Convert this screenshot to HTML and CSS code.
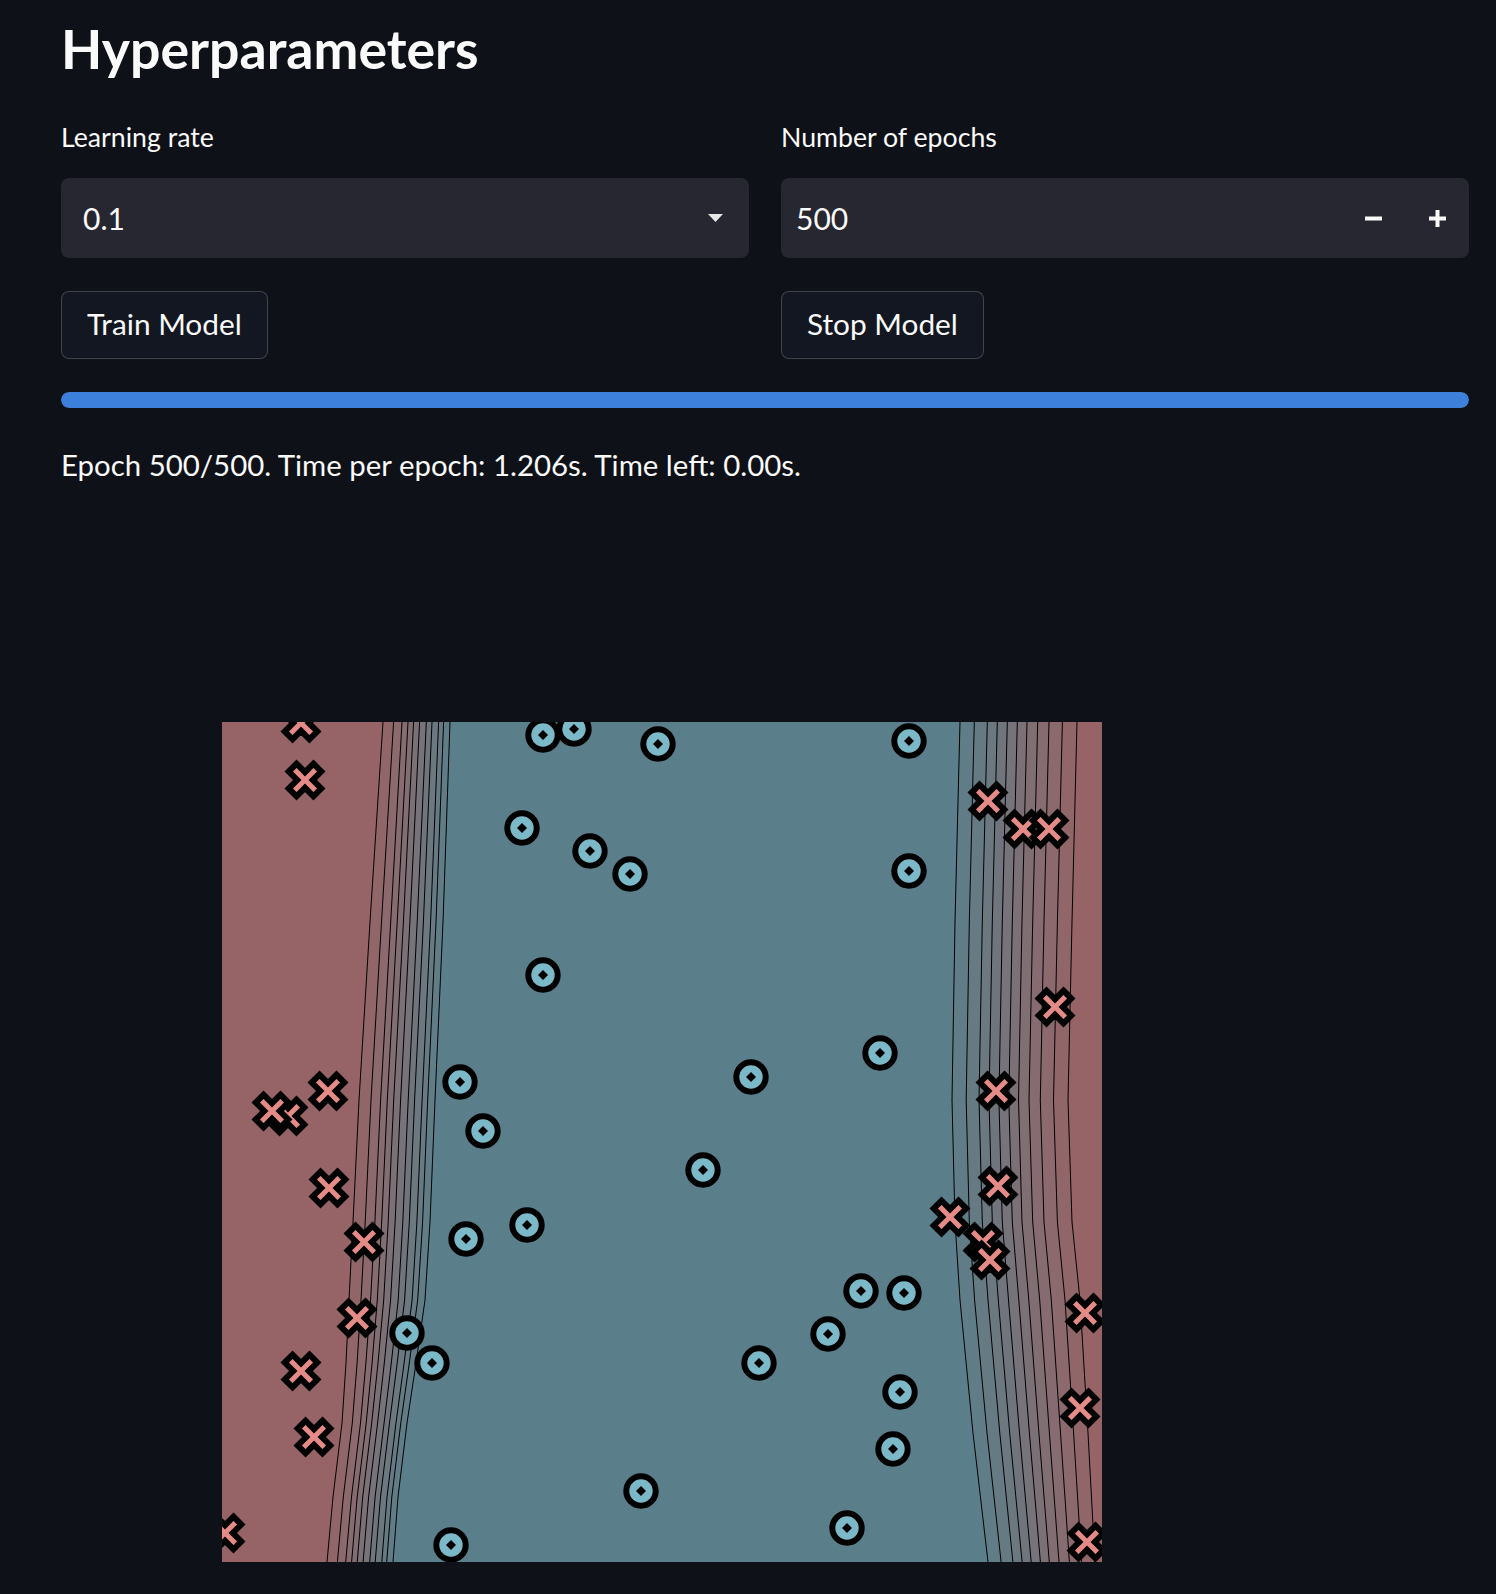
FILE: index.html
```html
<!DOCTYPE html>
<html lang="en">
<head>
<meta charset="utf-8">
<title>Hyperparameters</title>
<link rel="stylesheet" href="styles.css">
</head>
<body>
<main class="page">
  <h3 class="title">Hyperparameters</h3>
  <div class="cols fields">
    <div class="col">
      <div class="label">Learning rate</div>
      <div class="select">
        <span class="val">0.1</span>
        <svg class="caret" width="15" height="8" viewBox="0 0 15 8"><polygon points="0,0 15,0 7.5,8"/></svg>
      </div>
    </div>
    <div class="col">
      <div class="label">Number of epochs</div>
      <div class="number">
        <span class="val">500</span>
        <div class="steps">
          <button class="step" type="button"><svg width="17" height="17" viewBox="0 0 17 17"><rect class="glyph" x="0" y="6.5" width="17" height="4"/></svg></button>
          <button class="step" type="button"><svg width="17" height="17" viewBox="0 0 17 17"><rect class="glyph" x="0" y="6.5" width="17" height="4"/><rect class="glyph" x="6.5" y="0" width="4" height="17"/></svg></button>
        </div>
      </div>
    </div>
  </div>
  <div class="cols btnrow">
    <div class="col"><button class="btn" type="button">Train Model</button></div>
    <div class="col"><button class="btn" type="button">Stop Model</button></div>
  </div>
  <div class="progress"><div class="bar" style="width:100%"></div></div>
  <p class="status">Epoch 500/500. Time per epoch: 1.206s. Time left: 0.00s.</p>
  <div class="figure">
    <svg class="plot" width="880" height="840" viewBox="0 0 880 840">
      <defs>
        <clipPath id="plotclip"><rect width="880" height="840"/></clipPath>
        <g id="xm"><polygon class="xmark" transform="rotate(45)" points="-5.5,-17.5 5.5,-17.5 5.5,-5.5 17.5,-5.5 17.5,5.5 5.5,5.5 5.5,17.5 -5.5,17.5 -5.5,5.5 -17.5,5.5 -17.5,-5.5 -5.5,-5.5"/></g>
        <g id="om"><circle class="omark" r="14.7"/><polygon class="odot" points="0,-5 5,0 0,5 -5,0"/></g>
      </defs>
      <g clip-path="url(#plotclip)">
        <rect width="880" height="840" fill="#966466"/>
        <g class="ct">
          <path fill="#916669" d="M161,-20 L161,0 148,200 137,378 131,500 127,578 124,641 120,701 111,775 105,840 105,860 2000,860 2000,-20Z"/>
          <path fill="#8b696d" d="M171.6,-20 L171.6,0 159.5,200 149,378 143.2,500 139,578 135.1,641 130.3,701 121.3,775 115.4,840 115.4,860 2000,860 2000,-20Z"/>
          <path fill="#866b70" d="M180,-20 L180,0 168.7,200 158.6,378 152.9,500 148.6,578 143.9,641 138.5,701 129.5,775 123.7,840 123.7,860 2000,860 2000,-20Z"/>
          <path fill="#816e73" d="M186,-20 L186,0 175.2,200 165.3,378 159.7,500 155.3,578 150.1,641 144.2,701 135.2,775 129.6,840 129.6,860 2000,860 2000,-20Z"/>
          <path fill="#7b7076" d="M191.6,-20 L191.6,0 181.4,200 171.7,378 166.2,500 161.7,578 156,641 149.7,701 140.7,775 135.2,840 135.2,860 2000,860 2000,-20Z"/>
          <path fill="#76737a" d="M197.6,-20 L197.6,0 187.9,200 178.6,378 173.1,500 168.6,578 162.3,641 155.6,701 146.6,775 141.1,840 141.1,860 2000,860 2000,-20Z"/>
          <path fill="#70757d" d="M204.3,-20 L204.3,0 195.2,200 186.2,378 180.8,500 176.2,578 169.3,641 162.1,701 153.1,775 147.7,840 147.7,860 2000,860 2000,-20Z"/>
          <path fill="#6b7880" d="M210,-20 L210,0 201.4,200 192.6,378 187.3,500 182.6,578 175.2,641 167.5,701 158.5,775 153.2,840 153.2,860 2000,860 2000,-20Z"/>
          <path fill="#667a83" d="M216.6,-20 L216.6,0 208.6,200 200.1,378 194.9,500 190.1,578 182.1,641 174,701 165,775 159.8,840 159.8,860 2000,860 2000,-20Z"/>
          <path fill="#607d87" d="M221.6,-20 L221.6,0 214,200 205.7,378 200.6,500 195.7,578 187.3,641 178.8,701 169.8,775 164.7,840 164.7,860 2000,860 2000,-20Z"/>
          <path fill="#5b7f8a" d="M228,-20 L228,0 221,200 213,378 208,500 203,578 194,641 185,701 176,775 171,840 171,860 2000,860 2000,-20Z"/>

          <path fill="#607d87" d="M738,-20 L738,0 733,200 730,378 733,500 738,578 751,711 766,840 766,860 2000,860 2000,-20Z"/>
          <path fill="#667a83" d="M752.3,-20 L752.3,0 747.3,200 744.2,378 747.3,500 752.6,578 765,711 779.1,840 779.1,860 2000,860 2000,-20Z"/>
          <path fill="#6b7880" d="M765.3,-20 L765.3,0 760.3,200 757,378 760.3,500 766,578 777.8,711 790.9,840 790.9,860 2000,860 2000,-20Z"/>
          <path fill="#70757d" d="M775.3,-20 L775.3,0 770.3,200 767,378 770.3,500 776.3,578 787.7,711 800.1,840 800.1,860 2000,860 2000,-20Z"/>
          <path fill="#76737a" d="M785.3,-20 L785.3,0 780.3,200 776.9,378 780.3,500 786.5,578 797.5,711 809.2,840 809.2,860 2000,860 2000,-20Z"/>
          <path fill="#7b7076" d="M795.3,-20 L795.3,0 790.3,200 786.8,378 790.3,500 796.8,578 807.4,711 818.4,840 818.4,860 2000,860 2000,-20Z"/>
          <path fill="#816e73" d="M805,-20 L805,0 800,200 796.5,378 800,500 806.8,578 816.9,711 827.3,840 827.3,860 2000,860 2000,-20Z"/>
          <path fill="#866b70" d="M815.7,-20 L815.7,0 810.7,200 807,378 810.7,500 817.7,578 827.4,711 837,840 837,860 2000,860 2000,-20Z"/>
          <path fill="#8b696d" d="M827,-20 L827,0 822,200 818.3,378 822,500 829.3,578 838.5,711 847.4,840 847.4,860 2000,860 2000,-20Z"/>
          <path fill="#916669" d="M840.4,-20 L840.4,0 835.4,200 831.5,378 835.4,500 843,578 851.6,711 859.6,840 859.6,860 2000,860 2000,-20Z"/>
          <path fill="#966466" d="M855,-20 L855,0 850,200 846,378 850,500 858,578 866,711 873,840 873,860 2000,860 2000,-20Z"/>
        </g>

        <use href="#xm" x="79" y="1"/>
        <use href="#xm" x="83" y="58"/>
        <use href="#xm" x="766" y="79"/>
        <use href="#xm" x="801" y="107"/>
        <use href="#xm" x="827" y="107"/>
        <use href="#xm" x="833" y="285"/>
        <use href="#xm" x="106" y="369"/>
        <use href="#xm" x="66" y="394"/>
        <use href="#xm" x="50" y="389"/>
        <use href="#xm" x="774" y="369"/>
        <use href="#xm" x="107" y="466"/>
        <use href="#xm" x="776" y="464"/>
        <use href="#xm" x="728" y="495"/>
        <use href="#xm" x="142" y="520"/>
        <use href="#xm" x="761" y="520"/>
        <use href="#xm" x="768" y="538"/>
        <use href="#xm" x="135" y="596"/>
        <use href="#xm" x="863" y="591"/>
        <use href="#xm" x="79" y="649"/>
        <use href="#xm" x="858" y="686"/>
        <use href="#xm" x="92" y="715"/>
        <use href="#xm" x="3" y="811"/>
        <use href="#xm" x="865" y="820"/>

        <use href="#om" x="352" y="7"/>
        <use href="#om" x="321" y="13"/>
        <use href="#om" x="436" y="22"/>
        <use href="#om" x="687" y="19"/>
        <use href="#om" x="300" y="106"/>
        <use href="#om" x="368" y="129"/>
        <use href="#om" x="408" y="152"/>
        <use href="#om" x="687" y="149"/>
        <use href="#om" x="321" y="253"/>
        <use href="#om" x="238" y="360"/>
        <use href="#om" x="529" y="355"/>
        <use href="#om" x="658" y="331"/>
        <use href="#om" x="261" y="409"/>
        <use href="#om" x="481" y="448"/>
        <use href="#om" x="244" y="517"/>
        <use href="#om" x="305" y="503"/>
        <use href="#om" x="639" y="569"/>
        <use href="#om" x="682" y="571"/>
        <use href="#om" x="185" y="611"/>
        <use href="#om" x="210" y="641"/>
        <use href="#om" x="606" y="612"/>
        <use href="#om" x="537" y="641"/>
        <use href="#om" x="678" y="670"/>
        <use href="#om" x="671" y="727"/>
        <use href="#om" x="419" y="769"/>
        <use href="#om" x="625" y="806"/>
        <use href="#om" x="229" y="823"/>
      </g>
    </svg>
  </div>
</main>
</body>
</html>
```

FILE: styles.css
```css
* {
  box-sizing: border-box;
}

html,
body {
  margin: 0;
  background: #0e1117;
}

body {
  color: #fafafa;
  font-family: Lato, "Source Sans Pro", sans-serif;
}

.page {
  width: 1408px;
  margin-left: 61px;
  padding-top: 17px;
}

.title {
  margin: 0;
  font-size: 53.6px;
  font-weight: 700;
  line-height: 62.4px;
}

.cols {
  display: grid;
  grid-template-columns: 1fr 1fr;
  column-gap: 32px;
}

.fields {
  margin-top: 40px;
}

.label {
  font-size: 26.7px;
  line-height: 36px;
  margin-bottom: 23px;
}

.select,
.number {
  height: 80px;
  background: #262730;
  border-radius: 8px;
  display: flex;
  align-items: center;
}

.select {
  padding: 0 26px 0 22px;
}

.number {
  padding-left: 15px;
}

.val {
  flex: 1;
  font-size: 30px;
}

.caret polygon {
  fill: #e6e6e6;
}

.steps {
  display: flex;
  height: 100%;
}

.step {
  width: 64px;
  height: 100%;
  padding: 0;
  border: 0;
  background: none;
  display: flex;
  align-items: center;
  justify-content: center;
}

.glyph {
  fill: #fafafa;
}

.btnrow {
  margin-top: 33px;
}

.btn {
  height: 68px;
  padding: 0 25px 3px;
  display: inline-flex;
  align-items: center;
  background: #131721;
  border: 1px solid rgba(250, 250, 250, 0.2);
  border-radius: 8px;
  color: #fafafa;
  font-family: Lato, "Source Sans Pro", sans-serif;
  font-size: 29.8px;
}

.progress {
  margin-top: 33px;
  height: 16px;
  border-radius: 8px;
  background: #262730;
  overflow: hidden;
}

.bar {
  height: 100%;
  background: #3d80db;
  border-radius: 8px;
}

.status {
  margin: 33px 0 0;
  font-size: 29.4px;
  line-height: 48px;
}

.figure {
  margin-top: 233px;
  padding-left: 161px;
}

.plot {
  display: block;
}

.ct path {
  stroke: #000;
  stroke-width: 1;
}

.xmark {
  fill: #e48b87;
  stroke: #000;
  stroke-width: 6;
  stroke-linejoin: miter;
}

.omark {
  fill: #7bb9c9;
  stroke: #000;
  stroke-width: 6;
}

.odot {
  fill: #000;
}
```
